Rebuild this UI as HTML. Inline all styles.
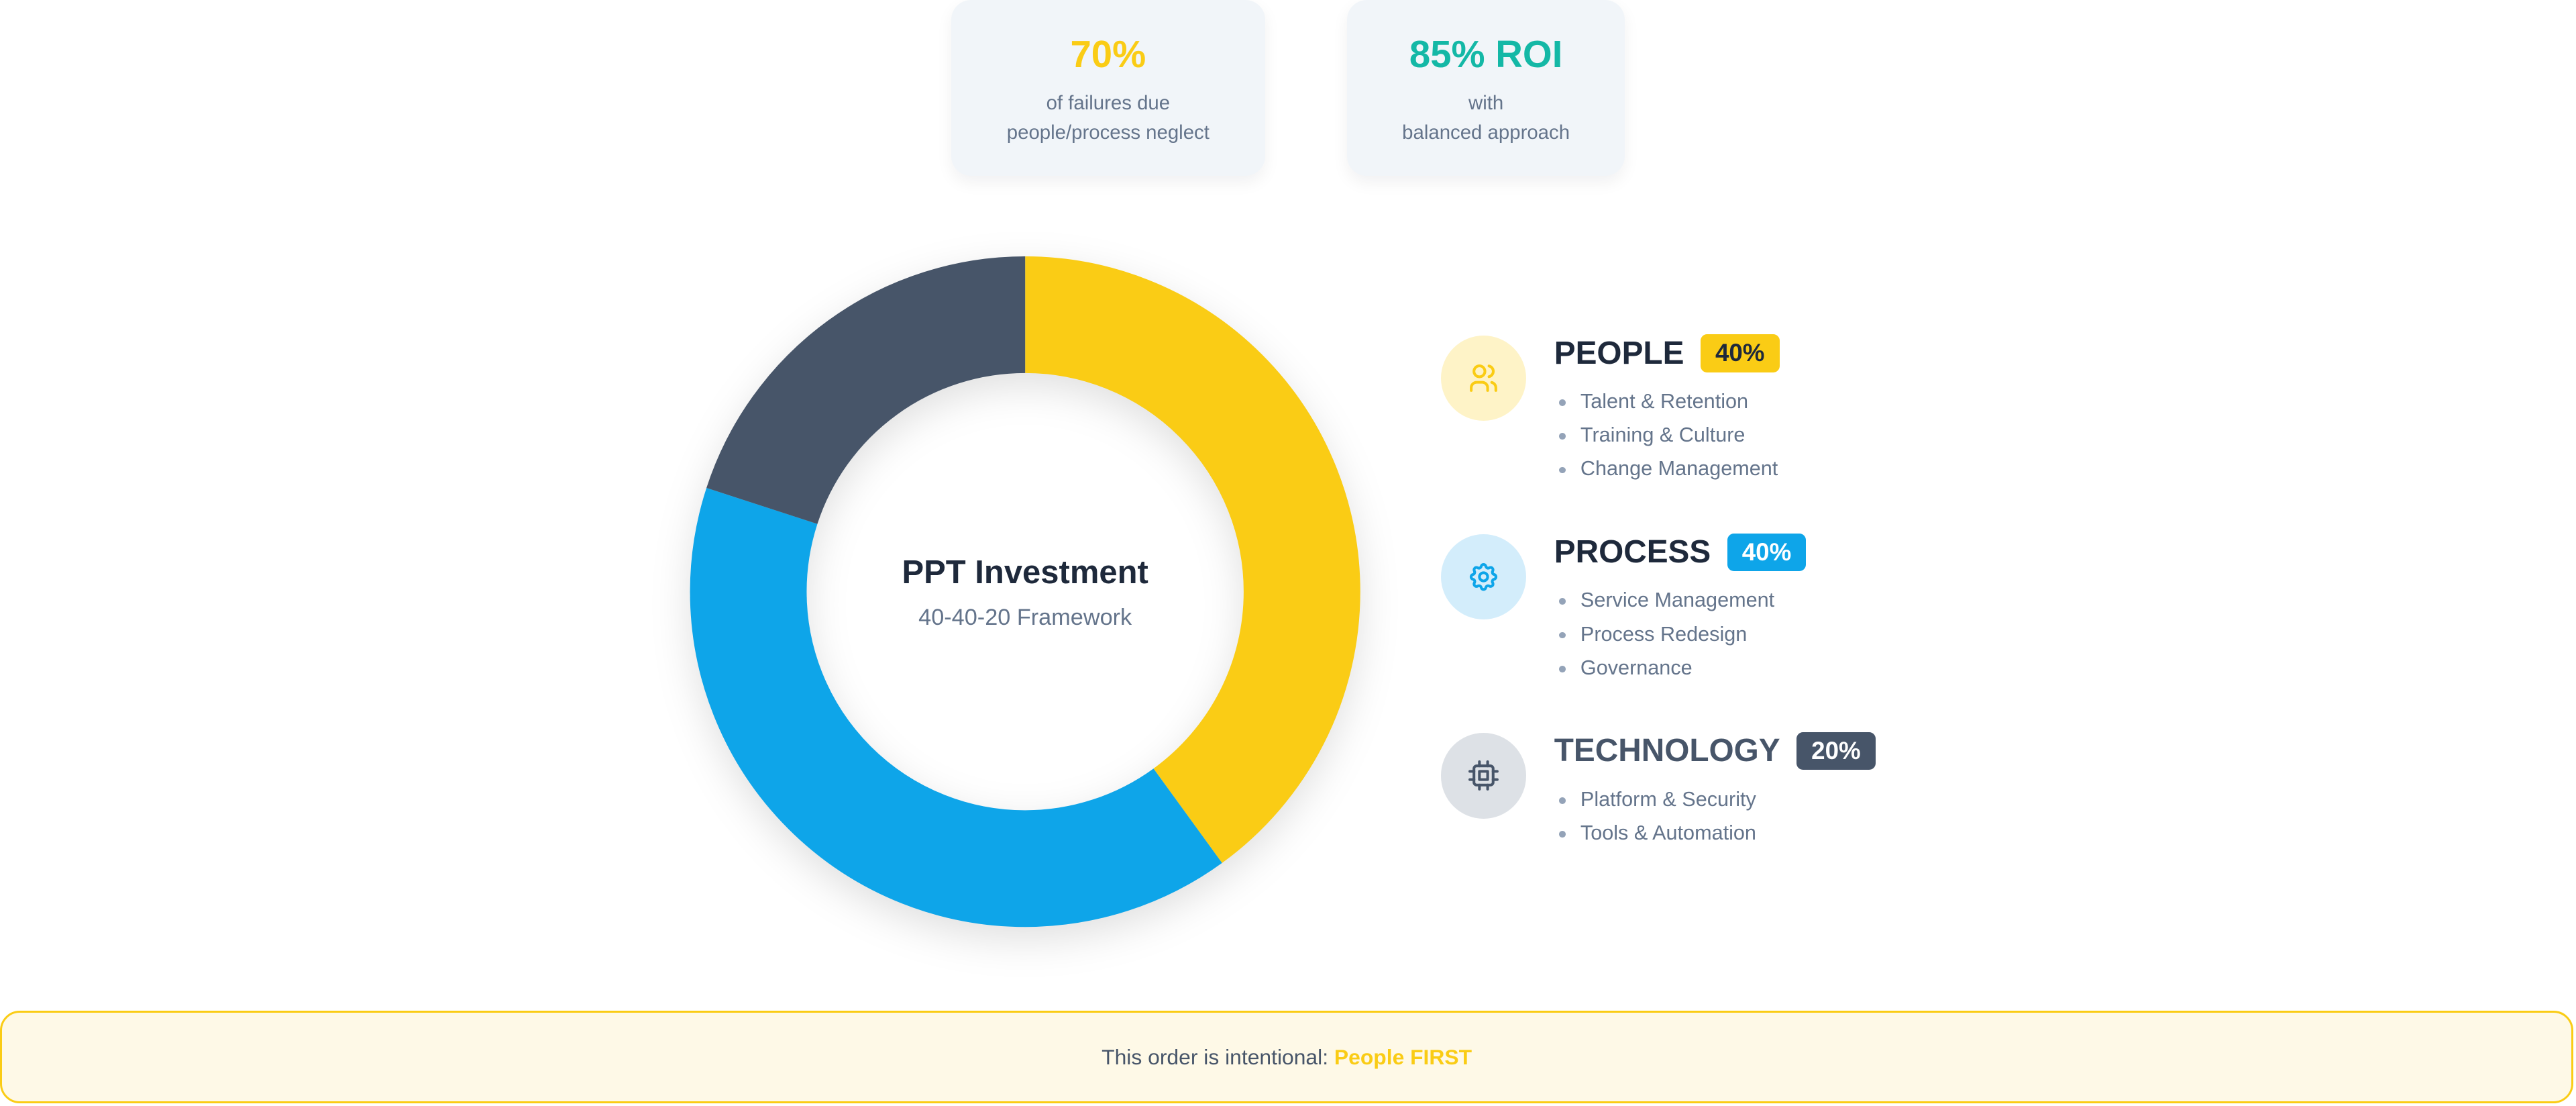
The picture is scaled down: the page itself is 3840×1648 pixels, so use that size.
<!DOCTYPE html>
<html><head><meta charset="utf-8">
<style>
html,body{margin:0;padding:0;background:#fff;}
body{width:3840px;height:1648px;overflow:hidden;font-family:"Liberation Sans",sans-serif;}
#w{zoom:2.449;width:1568px;height:673px;position:relative;}
.card{position:absolute;top:0;height:107px;background:#f1f5f9;border-radius:12px;box-shadow:0 4px 10px rgba(15,23,42,0.06);text-align:center;}
.card .big{position:absolute;left:0;right:0;top:19px;font-size:23px;font-weight:700;line-height:28px;}
.card .sub{position:absolute;left:0;right:0;top:54px;font-size:12px;line-height:18px;color:#64748b;}
.ct{position:absolute;text-align:center;left:474px;width:300px;}
.sec{position:absolute;left:877px;}
.ic{position:absolute;left:0;top:0;width:52px;height:52px;border-radius:50%;display:flex;align-items:center;justify-content:center;}
.tt{position:absolute;left:69px;top:-2px;font-size:19.5px;font-weight:700;white-space:nowrap;line-height:26px;display:flex;align-items:center;}
.bd{display:inline-block;margin-left:10px;font-size:15px;font-weight:700;padding:0 9px;height:23px;line-height:23px;border-radius:4px;}
ul{position:absolute;left:72px;top:30px;margin:0;padding:0;list-style:none;width:200px;}
li{font-size:12.5px;line-height:20.5px;color:#64748b;padding-left:13px;position:relative;white-space:nowrap;}
li:before{content:"";position:absolute;left:0;top:9px;width:4px;height:4px;border-radius:50%;background:#94a3b8;}
</style></head><body><div id="w">
<div class="card" style="left:579px;width:191px;"><div class="big" style="color:#facc15">70%</div><div class="sub">of failures due<br>people/process neglect</div></div>
<div class="card" style="left:820px;width:169px;"><div class="big" style="color:#14b8a6">85% ROI</div><div class="sub">with<br>balanced approach</div></div>

<svg style="position:absolute;left:0;top:0;filter:drop-shadow(0 8px 12px rgba(0,0,0,0.12))" width="1568" height="673">
<g transform="rotate(-90 624 360)" fill="none" stroke-width="71">
<circle cx="624" cy="360" r="168.5" stroke="#facc15" stroke-dasharray="423.5 1000"/>
<circle cx="624" cy="360" r="168.5" stroke="#0ea5e9" stroke-dasharray="0 423.5 423.5 1000"/>
<circle cx="624" cy="360" r="168.5" stroke="#475569" stroke-dasharray="0 847 212 1000"/>
</g>
</svg>
<div class="ct" style="top:337px;font-size:20px;font-weight:700;color:#1e293b;">PPT Investment</div>
<div class="ct" style="top:368px;font-size:14px;color:#64748b;">40-40-20 Framework</div>

<div class="sec" style="top:204px;">
<div class="ic" style="background:#fef3c7;"><svg width="20" height="20" viewBox="0 0 24 24" fill="none" stroke="#facc15" stroke-width="2" stroke-linecap="round"><circle cx="9" cy="7" r="4"/><path d="M3 21v-2a4 4 0 0 1 4-4h4a4 4 0 0 1 4 4v2"/><path d="M16 3.1a4 4 0 0 1 0 7.8"/><path d="M21 21v-2a4 4 0 0 0-3-3.9"/></svg></div>
<div class="tt" style="color:#1e293b;">PEOPLE<span class="bd" style="background:#facc15;color:#1e293b;">40%</span></div>
<ul><li>Talent &amp; Retention</li><li>Training &amp; Culture</li><li>Change Management</li></ul>
</div>
<div class="sec" style="top:325px;">
<div class="ic" style="background:#d3edfb;"><svg width="20" height="20" viewBox="0 0 24 24" fill="none" stroke="#0ea5e9" stroke-width="2" stroke-linecap="round" stroke-linejoin="round"><path d="M10.3 4.3c.4-1.8 3-1.8 3.4 0a1.7 1.7 0 0 0 2.6 1.1c1.5-.9 3.3.8 2.4 2.4a1.7 1.7 0 0 0 1 2.5c1.9.5 1.9 3 0 3.5a1.7 1.7 0 0 0-1 2.6c.9 1.5-.8 3.3-2.4 2.4a1.7 1.7 0 0 0-2.6 1c-.4 1.9-3 1.9-3.4 0a1.7 1.7 0 0 0-2.6-1c-1.5.9-3.3-.8-2.4-2.4a1.7 1.7 0 0 0-1-2.6c-1.9-.5-1.9-3 0-3.5a1.7 1.7 0 0 0 1-2.5c-.9-1.6.9-3.3 2.4-2.4a1.7 1.7 0 0 0 2.6-1.1z"/><circle cx="12" cy="12" r="3"/></svg></div>
<div class="tt" style="color:#1e293b;">PROCESS<span class="bd" style="background:#0ea5e9;color:#fff;">40%</span></div>
<ul><li>Service Management</li><li>Process Redesign</li><li>Governance</li></ul>
</div>
<div class="sec" style="top:446px;">
<div class="ic" style="background:#dde1e6;"><svg width="20" height="20" viewBox="0 0 24 24" fill="none" stroke="#475569" stroke-width="2" stroke-linecap="round" stroke-linejoin="round"><rect x="5" y="5" width="14" height="14" rx="2"/><rect x="9" y="9" width="6" height="6"/><path d="M9 2v3M15 2v3M9 19v3M15 19v3M2 9h3M2 15h3M19 9h3M19 15h3"/></svg></div>
<div class="tt" style="color:#475569;">TECHNOLOGY<span class="bd" style="background:#475569;color:#fff;">20%</span></div>
<ul><li>Platform &amp; Security</li><li>Tools &amp; Automation</li></ul>
</div>

<div style="position:absolute;left:0;top:615px;width:1564px;height:54px;border:1.5px solid #facc15;border-radius:12px;background:#fef9e7;text-align:center;line-height:54px;font-size:13px;color:#475569;">This order is intentional: <b style="color:#facc15">People FIRST</b></div>
</div></body></html>
